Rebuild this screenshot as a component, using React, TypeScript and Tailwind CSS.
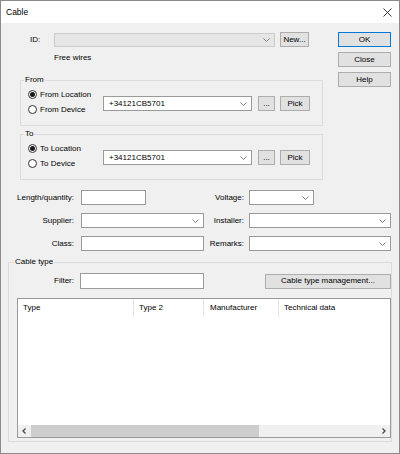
import type { ReactNode } from "react";
import clsx from "clsx";

function Chevron() {
  return (
    <svg width="7" height="4" viewBox="0 0 7 4" className="shrink-0">
      <polyline points="0.5,0.5 3.5,3.5 6.5,0.5" fill="none" stroke="#707070" strokeWidth="0.9" />
    </svg>
  );
}

function Combo({ className, value, disabled }: { className: string; value?: string; disabled?: boolean }) {
  return (
    <div
      className={clsx(
        "flex items-center justify-between border pl-[5px] pr-[4px]",
        disabled ? "bg-[#e6e6e6] border-[#cccccc]" : "bg-white border-[#9a9a9a]",
        className
      )}
    >
      <span>{value}</span>
      <Chevron />
    </div>
  );
}

function TextBox({ className }: { className: string }) {
  return <div className={clsx("border border-[#9a9a9a] bg-white", className)} />;
}

function Btn({ className, children, primary }: { className: string; children: ReactNode; primary?: boolean }) {
  return (
    <div
      className={clsx(
        "flex items-center justify-center bg-[#e1e1e1] border",
        primary ? "border-[#0078d7]" : "border-[#adadad]",
        className
      )}
    >
      {children}
    </div>
  );
}

function Radio({ label, checked }: { label: string; checked?: boolean }) {
  return (
    <div className="flex items-center h-[15px] gap-[3px]">
      <div className="w-[9px] h-[9px] rounded-full border border-[#333] bg-white flex items-center justify-center">
        {checked && <div className="w-[5px] h-[5px] rounded-full bg-[#1a1a1a]" />}
      </div>
      <span>{label}</span>
    </div>
  );
}

function EndpointGroup({ title, a, b, className }: { title: string; a: string; b: string; className?: string }) {
  return (
    <fieldset className={clsx("border border-[#dcdcdc] h-[51px]", className)}>
      <legend className="ml-[3px] px-[1px] leading-[10px]">{title}</legend>
      <div className="flex pl-[7px]">
        <div className="w-[75px] pt-[2px]">
          <Radio label={a} checked />
          <Radio label={b} />
        </div>
        <div className="flex mt-[11px]">
          <Combo className="w-[149px] h-[15px]" value="+34121CB5701" />
          <Btn className="ml-[6px] w-[17px] h-[15px]">...</Btn>
          <Btn className="ml-[5px] w-[30px] h-[15px]">Pick</Btn>
        </div>
      </div>
    </fieldset>
  );
}

function FormRow({ l1, c1, l2, c2, className }: { l1: string; c1: ReactNode; l2: string; c2: ReactNode; className?: string }) {
  return (
    <div className={clsx("flex items-center h-[15px]", className)}>
      <span className="w-[73px] text-right">{l1}</span>
      <div className="w-[130px] pl-[7px] flex">{c1}</div>
      <span className="w-[40px] text-right">{l2}</span>
      <div className="ml-[5px] flex">{c2}</div>
    </div>
  );
}

function ArrowL() {
  return (
    <svg width="5" height="6" viewBox="0 0 5 6">
      <polyline points="3.5,0.5 1,3 3.5,5.5" fill="none" stroke="#505050" strokeWidth="1.4" />
    </svg>
  );
}

function ArrowR() {
  return (
    <svg width="5" height="6" viewBox="0 0 5 6">
      <polyline points="1.5,0.5 4,3 1.5,5.5" fill="none" stroke="#505050" strokeWidth="1.4" />
    </svg>
  );
}

export default function App() {
  return (
    <div className="w-[400px] h-[454px] border border-[#8a8a8a] bg-[#f0f0f0] flex flex-col text-[8px] leading-[10px] text-black font-['Liberation_Sans',Arial,sans-serif]">
      {/* title bar */}
      <div className="h-[22px] bg-white flex items-center justify-between shrink-0">
        <span className="pl-[5px] text-[8.5px]">Cable</span>
        <svg width="9" height="9" viewBox="0 0 9 9" className="mr-[7px]">
          <path d="M0.5 0.5 L8.5 8.5 M8.5 0.5 L0.5 8.5" stroke="#222" strokeWidth="0.9" />
        </svg>
      </div>

      {/* top section */}
      <div className="flex">
        <div className="ml-[19px] w-[303px]">
          <div className="flex items-center h-[15px] mt-[9px]">
            <span className="w-[34px] pl-[10px]">ID:</span>
            <Combo className="w-[221px] h-[14px]" disabled />
            <Btn className="ml-[5px] w-[29px] h-[15px]">New...</Btn>
          </div>
          <div className="ml-[34px] mt-[6px] h-[10px]">Free wires</div>
          <EndpointGroup className="mt-[12px]" title="From" a="From Location" b="From Device" />
          <EndpointGroup className="mt-[3px]" title="To" a="To Location" b="To Device" />
        </div>
        <div className="ml-[15px] w-[53px] mt-[9px] flex flex-col gap-[5px]">
          <Btn className="h-[15px]" primary>OK</Btn>
          <Btn className="h-[15px]">Close</Btn>
          <Btn className="h-[15px]">Help</Btn>
        </div>
      </div>

      {/* fields */}
      <FormRow
        className="mt-[10px]"
        l1="Length/quantity:"
        c1={<TextBox className="w-[65px] h-[15px]" />}
        l2="Voltage:"
        c2={<Combo className="w-[65px] h-[15px]" />}
      />
      <FormRow
        className="mt-[8px]"
        l1="Supplier:"
        c1={<Combo className="w-[123px] h-[15px]" />}
        l2="Installer:"
        c2={<Combo className="w-[142px] h-[15px]" />}
      />
      <FormRow
        className="mt-[8px]"
        l1="Class:"
        c1={<TextBox className="w-[123px] h-[15px]" />}
        l2="Remarks:"
        c2={<Combo className="w-[142px] h-[15px]" />}
      />

      {/* cable type */}
      <fieldset className="mt-[6px] ml-[7px] w-[384px] h-[185px] border border-[#dcdcdc]">
        <legend className="ml-[5px] px-[1px] leading-[10px]">Cable type</legend>
        <div className="flex items-center h-[16px] mt-[6px]">
          <span className="w-[65px] text-right">Filter:</span>
          <TextBox className="ml-[6px] w-[124px] h-[16px]" />
          <Btn className="ml-[61px] w-[126px] h-[15px]">Cable type management...</Btn>
        </div>
        <div className="mt-[9px] ml-[8px] w-[374px] h-[140px] border border-[#999] bg-white flex flex-col">
          <div className="h-[18px] flex items-stretch">
            <div className="w-[116px] pl-[5px] flex items-center border-r border-[#e5e5e5]">Type</div>
            <div className="w-[70px] pl-[5px] flex items-center border-r border-[#e5e5e5]">Type 2</div>
            <div className="w-[75px] pl-[6px] flex items-center border-r border-[#e5e5e5]">Manufacturer</div>
            <div className="flex-1 pl-[5px] flex items-center">Technical data</div>
          </div>
          <div className="flex-1" />
          <div className="h-[12px] flex bg-[#f0f0f0]">
            <div className="w-[13px] flex items-center justify-center">
              <ArrowL />
            </div>
            <div className="w-[228px] bg-[#cdcdcd]" />
            <div className="flex-1" />
            <div className="w-[13px] flex items-center justify-center">
              <ArrowR />
            </div>
          </div>
        </div>
      </fieldset>
    </div>
  );
}
